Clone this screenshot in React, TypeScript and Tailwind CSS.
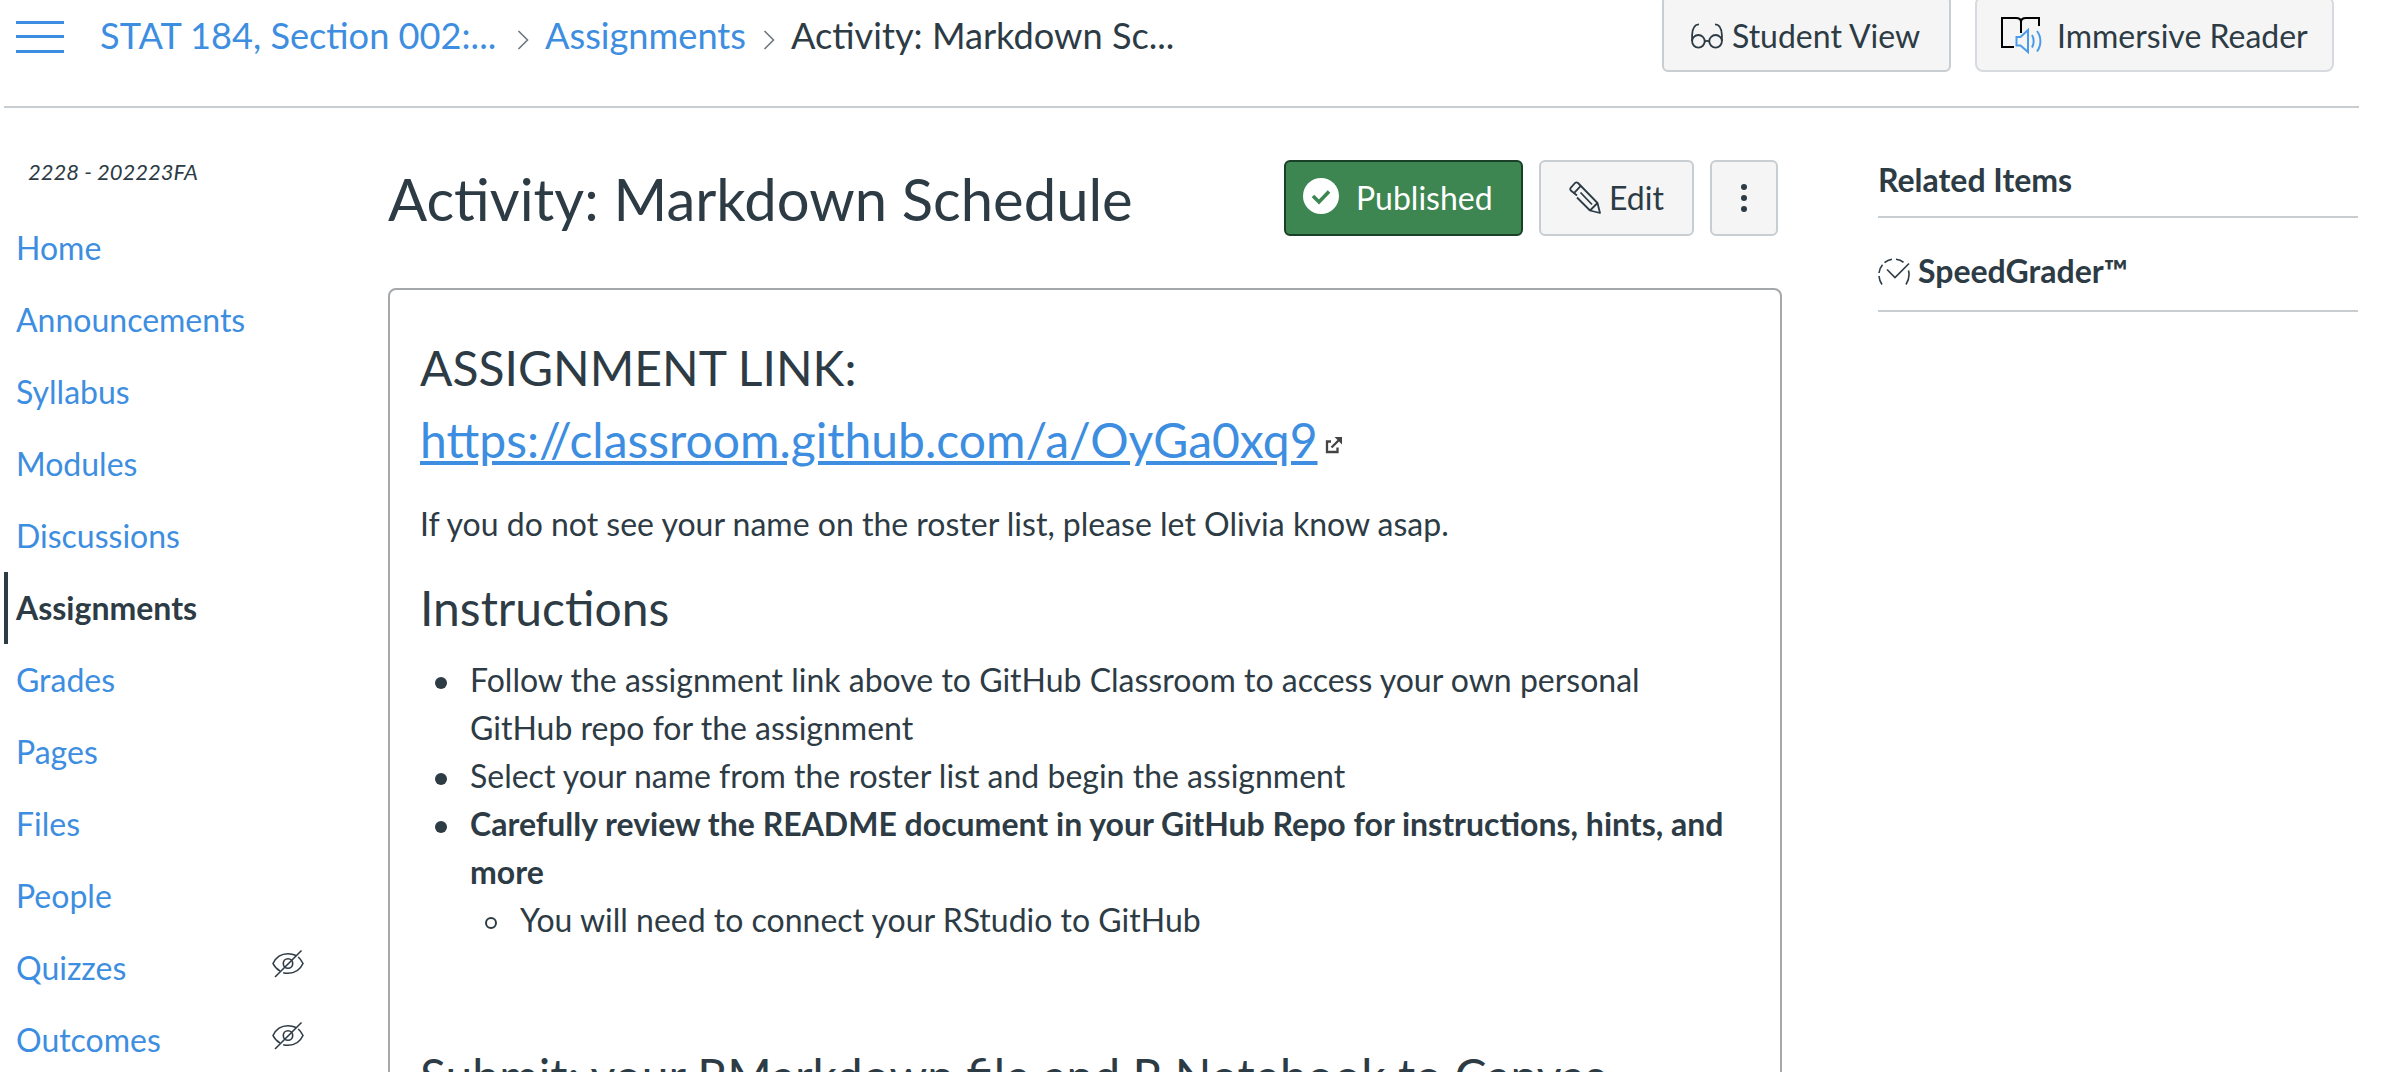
import React from "react";

const courseLinks = [
  { label: "Home" },
  { label: "Announcements" },
  { label: "Syllabus" },
  { label: "Modules" },
  { label: "Discussions" },
  { label: "Assignments", active: true },
  { label: "Grades" },
  { label: "Pages" },
  { label: "Files" },
  { label: "People" },
  { label: "Quizzes", hidden: true },
  { label: "Outcomes", hidden: true },
];

function HiddenIcon() {
  return (
    <svg className="h-[30px] w-8" viewBox="0 0 32 30" fill="none" stroke="currentColor" strokeWidth="1.6">
      <path d="M24 6.4C21.500 5.300 19 4.700 16 4.700C10 4.700 4 8 1 14.500C2.700 18 5 20.400 8 22" />
      <path d="M26.200 8C28.200 9.700 29.800 12 31 14.500C28 21 22 24.300 16 24.300C14.300 24.300 12.700 24.100 11.200 23.700" />
      <circle cx="16" cy="14.500" r="4.700" />
      <path d="M29.500 1.500L3 28" />
    </svg>
  );
}

function GlassesIcon() {
  return (
    <svg className="h-[26px] w-8" viewBox="0 0 32 26" fill="none" stroke="currentColor" strokeWidth="1.800">
      <circle cx="7.400" cy="18.300" r="6.300" />
      <circle cx="24.600" cy="18.300" r="6.300" />
      <path d="M13.600 19C15 17.500 17 17.500 18.400 19M1.100 18V12C1.400 5 3 1.300 8 1.300M30.900 18V12C30.600 5 29 1.300 24 1.300" />
    </svg>
  );
}

function ImmersiveIcon() {
  return (
    <svg className="h-10 w-[42px]" viewBox="0 0 42 40" fill="none" strokeWidth="2">
      <path d="M13 31H1V2H15C18 2 20 3.500 20 6V17M20 6C20 3.500 22 2 25 2H38V10" stroke="#000" />
      <path d="M15.500 21H19.500L27 14V36L19.500 29.500H15.500Z" stroke="#4b9bea" />
      <path d="M31 19C33.200 22.500 33.200 28 31 31.500M36 15C40.500 21 40.500 29.500 36 35.500" stroke="#4b9bea" />
    </svg>
  );
}

function PencilIcon() {
  return (
    <svg className="h-[34px] w-8" viewBox="0 0 32 34" fill="none" stroke="currentColor" strokeWidth="1.800" strokeLinejoin="round">
      <path d="M8 14.500L1.800 9.500C1 8.500 1 7.700 1.700 6.800L6 2C7 1.200 8 1.200 9 2L28.500 22L31 32L21 29.500L8 16.500" />
      <path d="M5 12.200L12 4.700M21 29.500L28.500 22M11.500 11.500L23 23.500" />
    </svg>
  );
}

function SpeedGraderIcon() {
  return (
    <svg className="h-7 w-8" viewBox="0 0 32 28" fill="none" stroke="currentColor" strokeWidth="1.600">
      <path d="M6.500 4.600C8.500 2.900 11 1.700 14 1.200M18 1.200C20.500 1.500 23.500 2.500 25.500 4.300M4.500 6.800C2.500 9.200 1.300 11.800 1 15M1 18C1.200 21 2.200 24 4 26.500M30.500 12.500C31.700 17.500 31 22 28 26.500" />
      <path d="M9 11.500L17 19.500L31 5.500" />
    </svg>
  );
}

function ExternalIcon() {
  return (
    <svg className="h-[18px] w-[18px]" viewBox="0 0 18 18" fill="none" stroke="#444" strokeWidth="2.300">
      <path d="M6 5.500H2V16H12.500V11.500" />
      <path d="M6.500 11.500L14 4" />
      <path d="M9.500 1H17V8.500Z" fill="#444" stroke="none" />
    </svg>
  );
}

function Separator() {
  return (
    <svg className="mt-2 h-5 w-3" viewBox="0 0 12 20" fill="none" stroke="#6b7780" strokeWidth="1.600">
      <path d="M1.500 1L10.500 10L1.500 19" />
    </svg>
  );
}

function Item({ children, hollow = false }: { children: React.ReactNode; hollow?: boolean }) {
  return (
    <li className="flex">
      <span
        className={
          hollow
            ? "mt-[21px] mr-[23px] ml-[15px] h-3 w-3 shrink-0 rounded-full border-2 border-[#2d3b45]"
            : "mt-[21px] mr-[23px] ml-[15px] h-3 w-3 shrink-0 rounded-full bg-[#2d3b45]"
        }
      />
      <div>{children}</div>
    </li>
  );
}

const button =
  "flex h-[76px] items-center rounded-md border-2 border-[#c7cdd1] bg-[#f5f5f5] text-[32px] leading-none";

export default function App() {
  return (
    <div className="h-[1072px] w-[2392px] overflow-hidden bg-white pl-1 font-['Lato',sans-serif] text-[32px] leading-[48px] text-[#2d3b45]">
      <header className="flex h-[108px] w-[2355px] justify-between border-b-2 border-[#c7cdd1]">
        <div className="flex h-[72px] items-center text-[36.2px] leading-[44px] whitespace-nowrap text-[#3d8ee0]">
          <button className="mt-px ml-3 flex h-8 w-12 flex-col justify-between" aria-label="Course navigation">
            <span className="h-[3px] w-full bg-[#3d8ee0]" />
            <span className="h-[3px] w-full bg-[#3d8ee0]" />
            <span className="h-[3px] w-full bg-[#3d8ee0]" />
          </button>
          <a className="mb-[3px] ml-9 w-[401px]">STAT 184, Section 002:...</a>
          <span className="ml-4 w-7"><Separator /></span>
          <a className="mb-[3px] w-[202px]">Assignments</a>
          <span className="ml-4 w-7"><Separator /></span>
          <span className="mb-[3px] text-[#2d3b45]">Activity: Markdown Sc...</span>
        </div>
        <div className="-mt-1 flex gap-6 pr-[25px]">
          <button className={`${button} w-[289px] pl-[27px]`}>
            <span className="mt-1"><GlassesIcon /></span>
            <span className="mt-[3px] ml-[9px]">Student View</span>
          </button>
          <button className="flex h-[76px] w-[359px] items-center rounded-lg border-2 border-[#d7dade] bg-[#f5f5f5] pl-6 text-[32px] leading-none">
            <span className="mt-1"><ImmersiveIcon /></span>
            <span className="mt-[3px] ml-[14px]">Immersive Reader</span>
          </button>
        </div>
      </header>

      <div className="flex">
        <nav className="w-[384px]">
          <p className="mt-10 mb-4 h-12 pl-6 text-[22px] italic">2228 - 202223FA</p>
          <ul>
            {courseLinks.map((link) => (
              <li
                key={link.label}
                className={
                  link.active
                    ? "flex h-[72px] items-center border-l-4 border-[#2d3b45] pl-2 font-bold"
                    : "flex h-[72px] items-center justify-between pl-3 text-[#3d8ee0]"
                }
              >
                <a>{link.label}</a>
                {link.hidden && (
                  <span className="mr-[84px] mb-2 text-[#2d3b45]"><HiddenIcon /></span>
                )}
              </li>
            ))}
          </ul>
        </nav>

        <main className="w-[1394px]">
          <div className="mt-[52px] flex h-[76px] items-center gap-4 pr-1">
            <h1 className="mt-[2px] flex-1 text-[57.95px] leading-[72px]">Activity: Markdown Schedule</h1>
            <button className="flex h-[76px] w-[239px] items-center rounded-md border-2 border-[#1a4027] bg-[#3d8551] pl-[17px] text-white">
              <svg className="mb-1 h-9 w-9" viewBox="0 0 36 36">
                <circle cx="18" cy="18" r="18" fill="#fff" />
                <path d="M10 18L16 24L26 13.500" fill="none" stroke="#3d8551" strokeWidth="3.600" />
              </svg>
              <span className="ml-[17px]">Published</span>
            </button>
            <button className={`${button} w-[155px] pl-7`}>
              <PencilIcon />
              <span className="ml-2">Edit</span>
            </button>
            <button className={`${button} w-[68px] flex-col justify-center gap-[5px]`} aria-label="Manage">
              <span className="h-[6px] w-[6px] rounded-full bg-[#2d3b45]" />
              <span className="h-[6px] w-[6px] rounded-full bg-[#2d3b45]" />
              <span className="h-[6px] w-[6px] rounded-full bg-[#2d3b45]" />
            </button>
          </div>

          <article className="mt-[52px] h-[900px] rounded-lg border-2 border-[#a5a8ab] px-[30px] pt-[42px]">
            <h2 className="text-[48px] leading-[72px]">ASSIGNMENT LINK:</h2>
            <h2 className="flex items-center text-[48px] leading-[72px]">
              <a className="text-[#3d8ee0] underline">https://classroom.github.com/a/OyGa0xq9</a>
              <span className="mt-[10px] ml-[7px]"><ExternalIcon /></span>
            </h2>
            <p className="mt-6">If you do not see your name on the roster list, please let Olivia know asap.</p>
            <h2 className="mt-6 text-[48px] leading-[72px]">Instructions</h2>
            <ul className="mt-3">
              <Item>Follow the assignment link above to GitHub Classroom to access your own personal GitHub repo for the assignment</Item>
              <Item>Select your name from the roster list and begin the assignment</Item>
              <Item>
                <strong>Carefully review the README document in your GitHub Repo for instructions, hints, and more</strong>
                <ul>
                  <Item hollow>You will need to connect your RStudio to GitHub</Item>
                </ul>
              </Item>
            </ul>
            <h2 className="mt-[96px] text-[48px] leading-[72px] whitespace-nowrap">Submit: your RMarkdown file and R Notebook to Canvas</h2>
          </article>
        </main>

        <aside className="mt-[48px] ml-24 w-[480px]">
          <h2 className="h-[62px] border-b-2 border-[#c7cdd1] font-bold">Related Items</h2>
          <a className="flex h-[94px] items-center gap-2 border-b-2 border-[#c7cdd1] pt-[14px] font-bold">
            <span className="mt-[2px]"><SpeedGraderIcon /></span>
            SpeedGrader™
          </a>
        </aside>
      </div>
    </div>
  );
}
